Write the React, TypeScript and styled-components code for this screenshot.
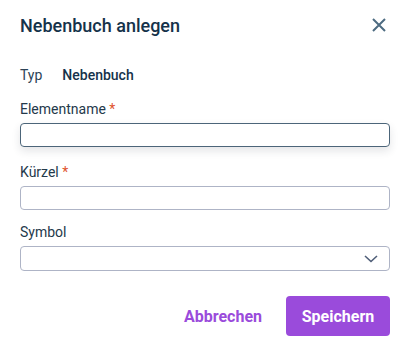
import styled, { createGlobalStyle } from 'styled-components'

const GlobalStyle = createGlobalStyle`
    body {
        margin: 0;
        background: #fff;
        font-family: Roboto, 'Liberation Sans', sans-serif;
        color: #1c3447;
    }
`
const Dialog = styled.div`
    width: 410px;
    height: 345px;
    box-sizing: border-box;
    padding: 12px 20px 0 20px;
    display: flex;
    flex-direction: column;
`
const Header = styled.div`
    display: flex;
    align-items: center;
    justify-content: space-between;
    height: 26px;
`
const Title = styled.h1`
    margin: 0;
    font-size: 18px;
    font-weight: 500;
    color: #15324a;
`
const CloseButton = styled.button`
    border: none;
    background: none;
    padding: 0;
    margin-right: 3px;
    width: 16px;
    height: 16px;
    display: flex;
    cursor: pointer;
`
const InfoRow = styled.div`
    display: flex;
    gap: 20px;
    margin-top: 29px;
    font-size: 14px;
    line-height: 16px;
`
const InfoLabel = styled.span`
    color: #2c4356;
`
const InfoValue = styled.span`
    font-weight: 500;
    color: #15324a;
`
const Field = styled.div<{ $gap?: number }>`
    display: flex;
    flex-direction: column;
    margin-top: ${(p) => p.$gap ?? 18}px;
`
const Label = styled.label`
    font-size: 14px;
    line-height: 16px;
    color: #24394b;
    margin-bottom: 6px;
`
const Required = styled.span`
    color: #e0532c;
`
const Input = styled.div<{ $focused?: boolean; $tall?: boolean }>`
    box-sizing: border-box;
    height: ${(p) => (p.$tall ? 25 : 24)}px;
    border-radius: 4px;
    border: ${(p) => (p.$focused ? '1.5px solid #4c6579' : '1px solid #aeb4c6')};
    box-shadow: ${(p) => (p.$focused ? '0 4px 8px rgba(30, 40, 60, 0.12)' : 'none')};
    display: flex;
    align-items: center;
    justify-content: flex-end;
    padding-right: 11px;
`
const Footer = styled.div`
    display: flex;
    justify-content: flex-end;
    align-items: center;
    gap: 24px;
    margin-top: 25px;
`
const TextButton = styled.button`
    border: none;
    background: none;
    font-family: Roboto, 'Liberation Sans', sans-serif;
    font-size: 16px;
    font-weight: 700;
    color: #9a4bdb;
    padding: 0;
    cursor: pointer;
`
const PrimaryButton = styled.button`
    border: none;
    background: #9a4bdb;
    color: #fff;
    font-family: Roboto, 'Liberation Sans', sans-serif;
    font-size: 16px;
    font-weight: 700;
    border-radius: 4px;
    width: 104px;
    height: 40px;
    cursor: pointer;
`

export default function App() {
    return (
        <Dialog>
            <GlobalStyle />
            <Header>
                <Title>Nebenbuch anlegen</Title>
                <CloseButton aria-label="Schließen">
                    <svg width="16" height="16" viewBox="0 0 16 16">
                        <path d="M2 2 L14 14 M14 2 L2 14" stroke="#4d6b81" strokeWidth="2" />
                    </svg>
                </CloseButton>
            </Header>
            <InfoRow>
                <InfoLabel>Typ</InfoLabel>
                <InfoValue>Nebenbuch</InfoValue>
            </InfoRow>
            <Field>
                <Label>
                    Elementname <Required>*</Required>
                </Label>
                <Input $focused />
            </Field>
            <Field $gap={17}>
                <Label>
                    Kürzel <Required>*</Required>
                </Label>
                <Input />
            </Field>
            <Field $gap={14}>
                <Label>Symbol</Label>
                <Input $tall>
                    <svg width="14" height="8" viewBox="0 0 14 8">
                        <path d="M1 1 L7 6.5 L13 1" stroke="#4f5e78" strokeWidth="1.6" fill="none" />
                    </svg>
                </Input>
            </Field>
            <Footer>
                <TextButton>Abbrechen</TextButton>
                <PrimaryButton>Speichern</PrimaryButton>
            </Footer>
        </Dialog>
    )
}
